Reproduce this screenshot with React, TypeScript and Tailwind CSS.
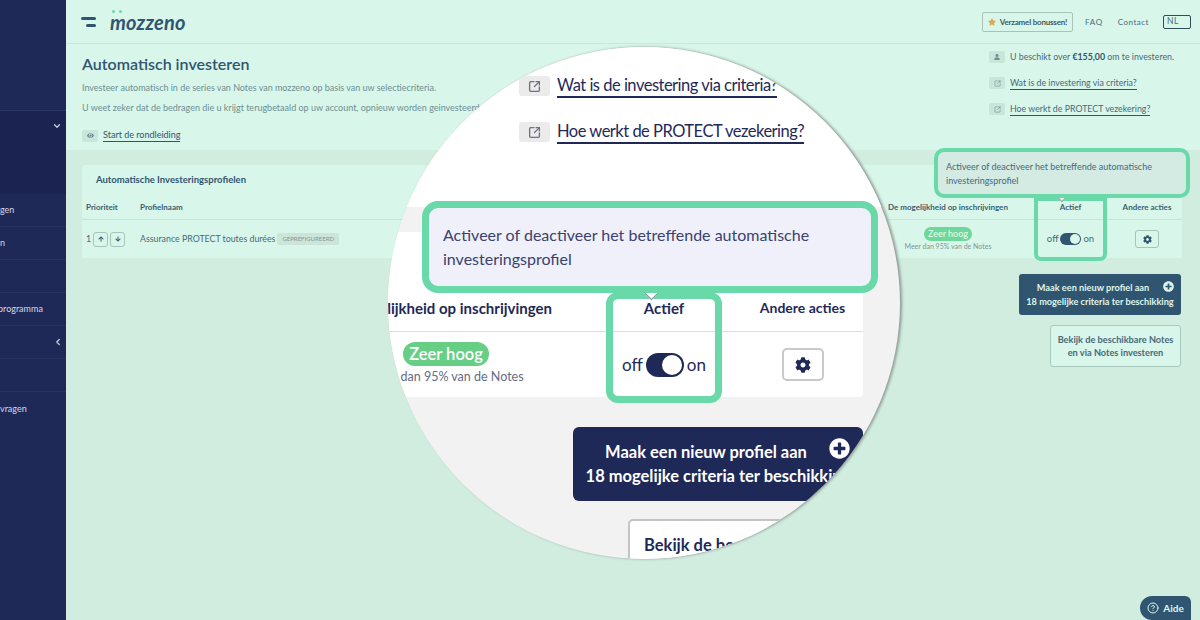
import { ChevronDown, ChevronLeft, CircleHelp, SquareArrowOutUpRight } from "lucide-react";
import { FaArrowDown, FaArrowUp, FaCog, FaEye, FaPlusCircle, FaStar, FaUser } from "react-icons/fa";

const sidebarRows = [
  { label: "gen", pad: "pl-0" },
  { label: "n", pad: "pl-0" },
  { label: "", pad: "pl-0" },
  { label: "programma", pad: "-ml-[2px]" },
];

function Sidebar() {
  return (
    <aside className="w-[66px] shrink-0 bg-[#1f2958] text-[9px] text-[#d5d8e6] overflow-hidden flex flex-col">
      <div className="h-[111px] border-b border-[#2b3566]" />
      <div className="h-[83px] bg-[#1b2350] flex justify-end pt-[10px] pr-[4px]">
        <ChevronDown size={10} strokeWidth={3} className="text-[#c9cde0]" />
      </div>
      {sidebarRows.map((r, i) => (
        <div key={i} className="h-[33px] border-b border-[#28325f] flex items-center whitespace-nowrap">
          <span className={r.pad}>{r.label}</span>
        </div>
      ))}
      <div className="h-[33px] border-b border-[#28325f] flex items-center justify-end pr-[3px]">
        <ChevronLeft size={10} strokeWidth={3} className="text-[#c9cde0]" />
      </div>
      <div className="h-[33px] border-b border-[#28325f]" />
      <div className="h-[33px] flex items-center whitespace-nowrap">vragen</div>
    </aside>
  );
}

function Topbar() {
  return (
    <header className="h-[44px] shrink-0 border-b border-[#cbe7da] bg-[#d9f6ea] flex items-center pl-[15px] pr-[9px]">
      <div className="w-[15px] flex flex-col items-end gap-[4px]">
        <div className="h-[3px] w-[15px] rounded bg-[#2f5570]" />
        <div className="h-[3px] w-[10px] rounded bg-[#2f5570]" />
      </div>
      <div className="relative ml-[14px] text-[20px] leading-none font-bold italic text-[#2f5570] tracking-[0.2px]">
        mozzeno
        <span className="absolute left-[2px] -top-[2px] flex gap-[4px]">
          <span className="w-[3px] h-[3px] rounded-full bg-[#69d9a9]" />
          <span className="w-[3px] h-[3px] rounded-full bg-[#69d9a9]" />
        </span>
      </div>
      <div className="ml-auto flex items-center">
        <div className="w-[91px] h-[20px] border border-[#a9c3ba] rounded-[2px] flex items-center justify-center gap-[4px] text-[8px] font-bold text-[#3f5b5f] tracking-[-0.2px]">
          <FaStar size={8} className="text-[#dca94f]" />
          Verzamel bonussen!
        </div>
        <span className="ml-[12px] text-[8px] tracking-[0.7px] text-[#4b6b78]">FAQ</span>
        <span className="ml-[15px] text-[8px] tracking-[0.5px] text-[#4b6b78]">Contact</span>
        <div className="ml-[14px] w-[28px] h-[14px] border-[1.5px] border-[#2f4f58] rounded-[2px] pl-[3px] text-[8.5px] leading-[11px] tracking-[0.6px] text-[#4b6b78]">NL</div>
      </div>
    </header>
  );
}

function IconBox({ children }: { children: React.ReactNode }) {
  return (
    <span className="w-[16px] h-[12px] shrink-0 rounded-[2px] bg-[#c9e6da] flex items-center justify-center text-[#6b8f92]">
      {children}
    </span>
  );
}

function Intro() {
  return (
    <section className="h-[106px] shrink-0 bg-[#d9f6ea] flex justify-between pl-[16px] pr-[10px]">
      <div>
        <h1 className="mt-[9px] text-[16px] leading-[22px] font-semibold text-[#2f5570]">Automatisch investeren</h1>
        <p className="mt-[6px] text-[9px] leading-[14px] text-[#6d8f92] tracking-[-0.02px]">Investeer automatisch in de series van Notes van mozzeno op basis van uw selectiecriteria.</p>
        <p className="mt-[6px] text-[9px] leading-[14px] text-[#6d8f92]">U weet zeker dat de bedragen die u krijgt terugbetaald op uw account, opnieuw worden geinvesteerd via uw profielen.</p>
        <div className="mt-[14px] flex items-center gap-[5px] text-[9px] text-[#2f5570]">
          <IconBox><FaEye size={7} /></IconBox>
          <span className="border-b border-[#2f5570] leading-[12px]">Start de rondleiding</span>
        </div>
      </div>
      <div className="w-[201px] pt-[6px] flex flex-col gap-[12px] text-[8.8px] text-[#47697a]">
        <div className="flex items-center gap-[5px] h-[14px]">
          <IconBox><FaUser size={6} /></IconBox>
          <span>U beschikt over <b className="text-[#2f5570]">€155,00</b> om te investeren.</span>
        </div>
        <div className="flex items-center gap-[5px] h-[14px]">
          <IconBox><SquareArrowOutUpRight size={7} /></IconBox>
          <span className="border-b border-[#2f5570] leading-[12px]">Wat is de investering via criteria?</span>
        </div>
        <div className="flex items-center gap-[5px] h-[14px]">
          <IconBox><SquareArrowOutUpRight size={7} /></IconBox>
          <span className="border-b border-[#2f5570] leading-[12px]">Hoe werkt de PROTECT vezekering?</span>
        </div>
      </div>
    </section>
  );
}

function ProfilesTable() {
  return (
    <div className="ml-[16px] w-[1100px] h-[93px] bg-[#d9f6ea] rounded-[3px] flex flex-col">
      <div className="pl-[14px] pt-[8px] text-[9.5px] leading-[13px] font-bold text-[#2f5570]">Automatische Investeringsprofielen</div>
      <div className="mt-[9px] h-[25px] flex items-center border-b border-[#c7e3d7] text-[8px] font-bold text-[#3b5d70] pb-[1px]">
        <div className="w-[58px] pl-[4px]">Prioriteit</div>
        <div className="flex-1">Profielnaam</div>
        <div className="w-[172px] text-center">De mogelijkheid op inschrijvingen</div>
        <div className="w-[73px] text-center">Actief</div>
        <div className="w-[75px] text-center pl-[5px]">Andere acties</div>
      </div>
      <div className="flex-1 flex items-center text-[8.8px] text-[#47697a]">
        <div className="w-[58px] pl-[4px] flex items-center gap-[2px]">
          <span>1</span>
          <span className="w-[15px] h-[15px] border border-[#a9c3ba] rounded-[3px] flex items-center justify-center text-[#2f5570]"><FaArrowUp size={6} /></span>
          <span className="w-[15px] h-[15px] border border-[#a9c3ba] rounded-[3px] flex items-center justify-center text-[#2f5570]"><FaArrowDown size={6} /></span>
        </div>
        <div className="flex-1 flex items-center gap-[2px]">
          <span>Assurance PROTECT toutes durées</span>
          <span className="h-[12px] px-[5px] rounded-[2px] bg-[#cde4d9] text-[6px] leading-[12px] text-[#7c9a98]">GEPREFIGUREERD</span>
        </div>
        <div className="w-[172px] flex flex-col items-center">
          <span className="h-[14px] px-[4px] rounded-full bg-[#6ed79a] text-[9px] leading-[14px] font-semibold text-[#dff8e8]">Zeer hoog</span>
          <span className="text-[7px] leading-[11px] text-[#7a9899]">Meer dan 95% van de Notes</span>
        </div>
        <div className="w-[73px] flex items-center justify-center gap-[2px] text-[9.5px]">
          <span>off</span>
          <span className="w-[21px] h-[12px] rounded-full bg-[#2f5570] flex items-center justify-end pr-[1px]"><span className="w-[10px] h-[10px] rounded-full bg-[#d9f6ea]" /></span>
          <span>on</span>
        </div>
        <div className="w-[75px] pl-[5px] flex justify-center">
          <span className="w-[24px] h-[18px] border border-[#a9c3ba] rounded-[3px] flex items-center justify-center text-[#2f5570]"><FaCog size={9} /></span>
        </div>
      </div>
    </div>
  );
}

function ActionButtons() {
  return (
    <div className="mt-[16px] pr-[19px] flex flex-col items-end gap-[10px] text-[9.2px] leading-[13.5px] font-bold text-center">
      <div className="relative w-[162px] h-[41px] rounded-[3px] bg-[#2f5570] text-[#dff5ec] flex flex-col justify-center">
        <FaPlusCircle size={11} className="absolute right-[7px] top-[7px] text-[#dff5ec]" />
        <span className="pr-[14px]">Maak een nieuw profiel aan</span>
        <span>18 mogelijke criteria ter beschikking</span>
      </div>
      <div className="w-[131px] h-[42px] rounded-[3px] border border-[#a9c9bd] bg-[#d9f6ea] text-[#47697a] flex flex-col justify-center">
        <span>Bekijk de beschikbare Notes</span>
        <span>en via Notes investeren</span>
      </div>
    </div>
  );
}

function Lens() {
  return (
    <div className="absolute left-[388px] top-[47px] w-[512px] h-[512px] rounded-full overflow-hidden bg-[#f2f2f2] shadow-[2px_0_3px_#8d9a93] flex flex-col">
      <div className="h-[160px] shrink-0 bg-white pl-[131px] pt-[29px] flex flex-col gap-[26px] text-[16.5px] tracking-[-0.5px] text-[#1f2958]">
        <div className="flex items-center gap-[7px] h-[20px]">
          <span className="w-[31px] h-[20px] rounded-[3px] bg-[#ebebeb] flex items-center justify-center text-[#6f7280]"><SquareArrowOutUpRight size={13} strokeWidth={2.5} /></span>
          <span className="border-b-2 border-[#1f2958] leading-[22px]">Wat is de investering via criteria?</span>
        </div>
        <div className="flex items-center gap-[7px] h-[20px]">
          <span className="w-[31px] h-[20px] rounded-[3px] bg-[#ebebeb] flex items-center justify-center text-[#6f7280]"><SquareArrowOutUpRight size={13} strokeWidth={2.5} /></span>
          <span className="border-b-2 border-[#1f2958] leading-[22px]">Hoe werkt de PROTECT vezekering?</span>
        </div>
      </div>
      <div className="mt-[25px] w-[475px] h-[165px] shrink-0 bg-white rounded-[4px] flex flex-col">
        <div className="h-[100px] shrink-0 border-b border-[#dcdcdc] flex items-end pb-[13px] text-[15px] leading-[20px] font-bold text-[#1f2958]">
          <div className="w-[218px] pr-[54px] whitespace-nowrap overflow-hidden flex justify-end">De mogelijkheid op inschrijvingen</div>
          <div className="w-[116px] text-center">Actief</div>
          <div className="w-[141px] text-center pl-[20px] text-[14px] whitespace-nowrap">Andere acties</div>
        </div>
        <div className="flex-1 flex items-center">
          <div className="w-[218px] flex flex-col items-center pr-[102px]">
            <span className="h-[24px] px-[6px] rounded-full bg-[#66cf85] text-[16.5px] leading-[24px] font-semibold text-white whitespace-nowrap">Zeer hoog</span>
            <span className="text-[12.5px] leading-[22px] text-[#666b85] whitespace-nowrap">Meer dan 95% van de Notes</span>
          </div>
          <div className="w-[116px] flex items-center justify-center gap-[3px] text-[17px] text-[#1f2958]">
            <span>off</span>
            <span className="w-[38px] h-[24px] rounded-full bg-[#1f2958] flex items-center justify-end pr-[2px]"><span className="w-[20px] h-[20px] rounded-full bg-white" /></span>
            <span>on</span>
          </div>
          <div className="w-[141px] pl-[20px] flex justify-center">
            <span className="w-[42px] h-[33px] border-2 border-[#c9c9c9] rounded-[5px] flex items-center justify-center text-[#1f2958]"><FaCog size={16} /></span>
          </div>
        </div>
      </div>
      <div className="mt-[30px] ml-[185px] w-[290px] h-[74px] shrink-0 rounded-[6px] bg-[#1f2958] text-white text-[16.5px] leading-[24px] font-bold flex flex-col justify-center items-center relative whitespace-nowrap">
        <FaPlusCircle size={21} className="absolute right-[13px] top-[11px]" />
        <span className="pr-[24px]">Maak een nieuw profiel aan</span>
        <span>18 mogelijke criteria ter beschikking</span>
      </div>
      <div className="mt-[18px] ml-[240px] w-[235px] h-[74px] shrink-0 rounded-[5px] border-2 border-[#c4c4c4] bg-white pl-[14px] pt-[12px] text-[16.5px] leading-[24px] font-bold text-[#1f2958] whitespace-nowrap">
        Bekijk de beschikbare Notes
      </div>

      {/* highlight boxes over the table */}
      <div className="absolute left-[218px] top-[245px] w-[116px] h-[111px] border-[7px] border-[#69d9a9] rounded-[12px]" />
      <div className="absolute left-[258px] top-[240px] w-[11px] h-[11px] rotate-45 bg-white border-r border-b border-[#8c8fa3]" />
      <div className="absolute left-[34px] top-[154px] w-[456px] h-[92px] border-[7px] border-[#69d9a9] rounded-[16px] bg-[#eff0f9] pl-[14px] flex items-center text-[16px] leading-[24px] text-[#3b4270]">
        <span className="w-[400px]">Activeer of deactiveer het betreffende automatische investeringsprofiel</span>
      </div>
    </div>
  );
}

export default function App() {
  return (
    <div className="relative w-[1200px] h-[620px] overflow-hidden flex bg-[#d1ede0] font-['Lato','Noto_Sans',sans-serif]">
      <Sidebar />
      <main className="flex-1 flex flex-col">
        <Topbar />
        <Intro />
        <div className="flex-1 pt-[15px]">
          <ProfilesTable />
          <ActionButtons />
        </div>
      </main>

      {/* page highlight on the Actief column */}
      <div className="absolute left-[1034px] top-[197px] w-[73px] h-[64px] border-[4px] border-[#69d9a9] rounded-b-[7px]" />
      <div className="absolute left-[1059px] top-[195px] w-[6px] h-[6px] rotate-45 bg-[#d9f6ea] border-r border-b border-[#8fa8a3]" />
      <div className="absolute left-[934px] top-[148px] w-[256px] h-[50px] border-[4px] border-[#69d9a9] rounded-[10px] bg-[#d3ebe3] pl-[8px] pt-[1px] flex items-center text-[9px] leading-[14px] text-[#47697a]">
        <span className="w-[225px]">Activeer of deactiveer het betreffende automatische investeringsprofiel</span>
      </div>

      <Lens />

      <div className="absolute right-[9px] bottom-0 w-[51px] h-[24px] rounded-tl-[12px] rounded-tr-[6px] rounded-bl-[12px] bg-[#2f5570] text-[#dff5ec] flex items-center justify-center gap-[4px] text-[10px] font-bold">
        <CircleHelp size={12} />
        Aide
      </div>
    </div>
  );
}
